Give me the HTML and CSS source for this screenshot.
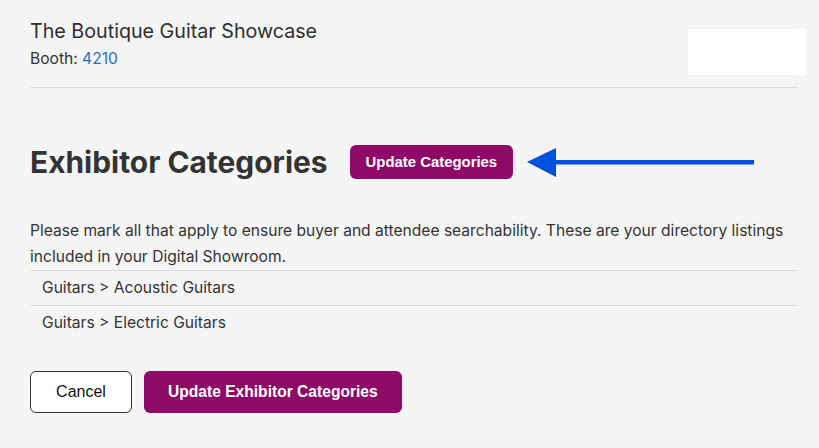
FILE: index.html
```html
<!DOCTYPE html>
<html>
<head>
<meta charset="utf-8">
<link rel="stylesheet" href="styles.css">
</head>
<body>
<div class="page">
  <header class="header">
    <div class="info">
      <div class="company">The Boutique Guitar Showcase</div>
      <div class="booth">Booth: <a class="booth-num" href="#">4210</a></div>
    </div>
    <div class="logo-box"></div>
  </header>
  <section class="section">
    <div class="title-row">
      <h1 class="title">Exhibitor Categories</h1>
      <button class="btn-small">Update Categories</button>
      <svg class="arrow" width="230" height="32" viewBox="0 0 230 32">
        <polygon points="0,16 29,2 29,31" fill="#0051e0"/>
        <rect x="27" y="14" width="200" height="4.5" fill="#0051e0"/>
      </svg>
    </div>
    <p class="desc">Please mark all that apply to ensure buyer and attendee searchability. These are your directory listings included in your Digital Showroom.</p>
    <ul class="list">
      <li class="item">Guitars &gt; Acoustic Guitars</li>
      <li class="item">Guitars &gt; Electric Guitars</li>
    </ul>
    <div class="actions">
      <button class="btn-cancel">Cancel</button>
      <button class="btn-primary">Update Exhibitor Categories</button>
    </div>
  </section>
</div>
</body>
</html>
```
FILE: styles.css
```css
html, body {
  margin: 0;
  padding: 0;
  background: #f5f5f5;
}
body {
  font-family: Inter, "Noto Sans", sans-serif;
  color: #333333;
}
.page {
  padding: 0 21px 0 30px;
}
.header {
  display: flex;
  justify-content: space-between;
  align-items: flex-start;
  padding-top: 18px;
  padding-bottom: 12px;
  border-bottom: 1px solid #dcdcdc;
  background: #f4f4f4;
}
.company {
  font-size: 19.7px;
  line-height: 26px;
  color: #2f2f2f;
}
.booth {
  font-size: 15.6px;
  line-height: 20px;
  margin-top: 5px;
}
.booth-num {
  color: #1f6fc5;
  text-decoration: none;
}
.logo-box {
  width: 118px;
  height: 46px;
  background: #ffffff;
  margin-top: 11px;
  margin-right: -8px;
}
.section {
  padding-top: 56px;
}
.title-row {
  display: flex;
  align-items: center;
  height: 36px;
}
.title {
  margin: 0;
  font-size: 29.9px;
  font-weight: 700;
  line-height: 36px;
  color: #333333;
}
.btn-small {
  margin-left: 22px;
  height: 34px;
  padding: 0 16px;
  border: none;
  border-radius: 6px;
  background: #8f0a66;
  color: #ffffff;
  font-family: "Liberation Sans", Arial, sans-serif;
  font-weight: 700;
  font-size: 14.9px;
}
.arrow {
  margin-left: 14px;
  display: block;
}
.desc {
  margin: 38px 0 0;
  font-size: 15.6px;
  line-height: 26px;
  color: #333333;
}
.list {
  list-style: none;
  margin: 0;
  padding: 0;
}
.item {
  font-size: 15.6px;
  line-height: 34px;
  padding-left: 12px;
  border-top: 1px solid #dcdcdc;
}
.actions {
  display: flex;
  gap: 12px;
  margin-top: 31px;
}
.btn-cancel {
  height: 42px;
  width: 102px;
  border: 1px solid #333333;
  border-radius: 6px;
  background: #ffffff;
  color: #111111;
  font-family: "Liberation Sans", Arial, sans-serif;
  font-size: 16px;
}
.btn-primary {
  height: 42px;
  padding: 0 24px;
  border: none;
  border-radius: 6px;
  background: #8f0a66;
  color: #ffffff;
  font-family: "Liberation Sans", Arial, sans-serif;
  font-weight: 700;
  font-size: 15.6px;
}
```
